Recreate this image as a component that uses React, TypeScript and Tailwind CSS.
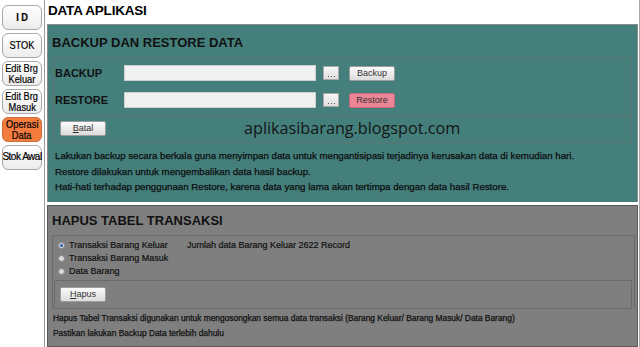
import React from "react";

function SideBtn({ lines, active, bold, tight }: { lines: string[]; active?: boolean; bold?: boolean; tight?: boolean }) {
  return (
    <div
      className={
        "ml-[2px] flex h-[25px] w-[40px] flex-col items-center justify-center rounded-[6px] border text-center text-black " +
        (active
          ? "border-[#c96a3a] bg-[#f47c3f]"
          : "border-[#a9a9a9] bg-gradient-to-b from-white to-[#ececec]")
      }
    >
      {lines.map((l) => (
        <span
          key={l}
          className={
            "block whitespace-nowrap leading-[10.5px] [-webkit-text-stroke:0.2px_#000] " +
            (tight ? "text-[10px] tracking-[-0.5px] " : "scale-x-[0.84] text-[11px] ") +
            (bold ? "font-bold" : "")
          }
        >
          {l}
        </span>
      ))}
    </div>
  );
}

function Btn({ children, pink }: { children: React.ReactNode; pink?: boolean }) {
  return (
    <div
      className={
        "flex h-[15px] w-[46px] items-center justify-center rounded-[2px] border text-[9px] leading-none " +
        (pink
          ? "border-[#c46a78] bg-[#ec8595] text-[#333]"
          : "border-[#9c9c9c] bg-gradient-to-b from-[#fbfbfb] to-[#dcdcdc] text-[#333]")
      }
    >
      {children}
    </div>
  );
}

function Dots() {
  return (
    <div className="ml-[7px] flex h-[14px] w-[16px] items-end justify-center border border-[#a8a8a8] bg-gradient-to-b from-[#f6f6f6] to-[#e0e0e0] pb-[2px]">
      <div className="flex gap-[2px]">
        <div className="h-[1px] w-[1px] bg-[#555]" />
        <div className="h-[1px] w-[1px] bg-[#555]" />
        <div className="h-[1px] w-[1px] bg-[#555]" />
      </div>
    </div>
  );
}

function Radio({ checked }: { checked?: boolean }) {
  return (
    <div className="flex h-[7px] w-[7px] items-center justify-center rounded-full border border-[#8a8a8a] bg-[#d8d8d8]">
      {checked && <div className="h-[3px] w-[3px] rounded-full bg-[#2a5db0]" />}
    </div>
  );
}

export default function App() {
  return (
    <div
      className="flex h-[347px] w-[640px] overflow-hidden bg-white text-black"
      style={{ fontFamily: '"Liberation Sans", Arial, sans-serif' }}
    >
      {/* Sidebar */}
      <div className="flex w-[45px] shrink-0 flex-col gap-[3px] border-r border-[#9a9a9a] pt-[5px]">
        <SideBtn lines={["I D"]} bold />
        <SideBtn lines={["STOK"]} />
        <SideBtn lines={["Edit Brg", "Keluar"]} />
        <SideBtn lines={["Edit Brg", "Masuk"]} />
        <SideBtn lines={["Operasi", "Data"]} active />
        <SideBtn lines={["Stok Awal"]} tight />
      </div>

      {/* Main */}
      <div className="flex w-[595px] shrink-0 flex-col border-r border-[#a8a8a8] pl-[2px] pr-[1px]">
        <div className="h-[24px] pl-[1px] pt-[3px] text-[13.5px] font-bold leading-[16px] tracking-[-0.2px]">DATA APLIKASI</div>

        {/* Backup panel */}
        <div className="flex h-[178px] flex-col border-l border-r border-t border-[#8a8a8a] bg-[#447f7c]">
          <div className="mt-[10px] h-[16px] pl-[4px] text-[13px] font-bold leading-[16px] text-[#111]">
            BACKUP DAN RESTORE DATA
          </div>
          <div className="ml-[5px] mt-[6px] flex h-[59px] w-[579px] flex-col gap-[11px] border border-[#5d7473] pt-[7px]">
            <div className="flex h-[16px] items-center">
              <div className="w-[70px] pl-[1px] text-[11px] font-bold text-[#111]">BACKUP</div>
              <div className="h-[16px] w-[192px] border border-[#cfcfcf] bg-[#f1f1f1]" />
              <Dots />
              <div className="ml-[10px]"><Btn>Backup</Btn></div>
            </div>
            <div className="flex h-[16px] items-center">
              <div className="w-[70px] pl-[1px] text-[11px] font-bold text-[#111]">RESTORE</div>
              <div className="h-[16px] w-[192px] border border-[#cfcfcf] bg-[#f1f1f1]" />
              <Dots />
              <div className="ml-[10px]"><Btn pink>Restore</Btn></div>
            </div>
          </div>
          <div className="ml-[5px] flex h-[27px] w-[579px] items-start border-b border-l border-r border-[#5d7473]">
            <div className="ml-[6px] mt-[5px]"><Btn><span><span className="underline">B</span>atal</span></Btn></div>
            <div
              className="ml-[138px] mt-[2px] text-[16.2px] leading-[20px] text-[#151515]"
              style={{ fontFamily: '"Open Sans", sans-serif' }}
            >
              aplikasibarang.blogspot.com
            </div>
          </div>
          <div className="pl-[7px] pt-[5px] text-[9.7px] leading-[15.5px] text-[#0d0d0d] [-webkit-text-stroke:0.25px_#0d0d0d]">
            <div>Lakukan backup secara berkala guna menyimpan data untuk mengantisipasi terjadinya kerusakan data di kemudian hari.</div>
            <div>Restore dilakukan untuk mengembalikan data hasil backup.</div>
            <div>Hati-hati terhadap penggunaan Restore, karena data yang lama akan tertimpa dengan data hasil Restore.</div>
          </div>
        </div>

        <div className="h-[3px]" />

        {/* Hapus panel */}
        <div className="flex h-[142px] flex-col border border-[#5a5a5a] bg-[#7f7f7f]">
          <div className="mt-[7px] h-[16px] pl-[4px] text-[13px] font-bold leading-[16px] text-[#111]">
            HAPUS TABEL TRANSAKSI
          </div>
          <div className="ml-[4px] mt-[6px] flex w-[583px] flex-col border-l border-r border-t border-[#6b6b6b]">
            <div className="flex pl-[5px] pt-[3px] text-[9px] text-[#111] [-webkit-text-stroke:0.2px_#111]">
              <div className="flex w-[129px] flex-col">
                <div className="flex h-[13px] items-center gap-[4px]"><Radio checked /><span>Transaksi Barang Keluar</span></div>
                <div className="flex h-[13px] items-center gap-[4px]"><Radio /><span>Transaksi Barang Masuk</span></div>
                <div className="flex h-[13px] items-center gap-[4px]"><Radio /><span>Data Barang</span></div>
              </div>
              <div className="flex h-[13px] items-center">Jumlah data Barang Keluar 2622 Record</div>
            </div>
            <div className="ml-[1px] mt-[2px] h-[29px] w-[578px] border border-[#6b6b6b] pl-[5px] pt-[6px]">
              <Btn><span><span className="underline">H</span>apus</span></Btn>
            </div>
          </div>
          <div className="pl-[5px] pt-[2px] text-[8.4px] leading-[15px] text-[#111] [-webkit-text-stroke:0.25px_#111]">
            <div>Hapus Tabel Transaksi digunakan untuk mengosongkan semua data transaksi (Barang Keluar/ Barang Masuk/ Data Barang)</div>
            <div>Pastikan lakukan Backup Data terlebih dahulu</div>
          </div>
        </div>
      </div>
    </div>
  );
}
